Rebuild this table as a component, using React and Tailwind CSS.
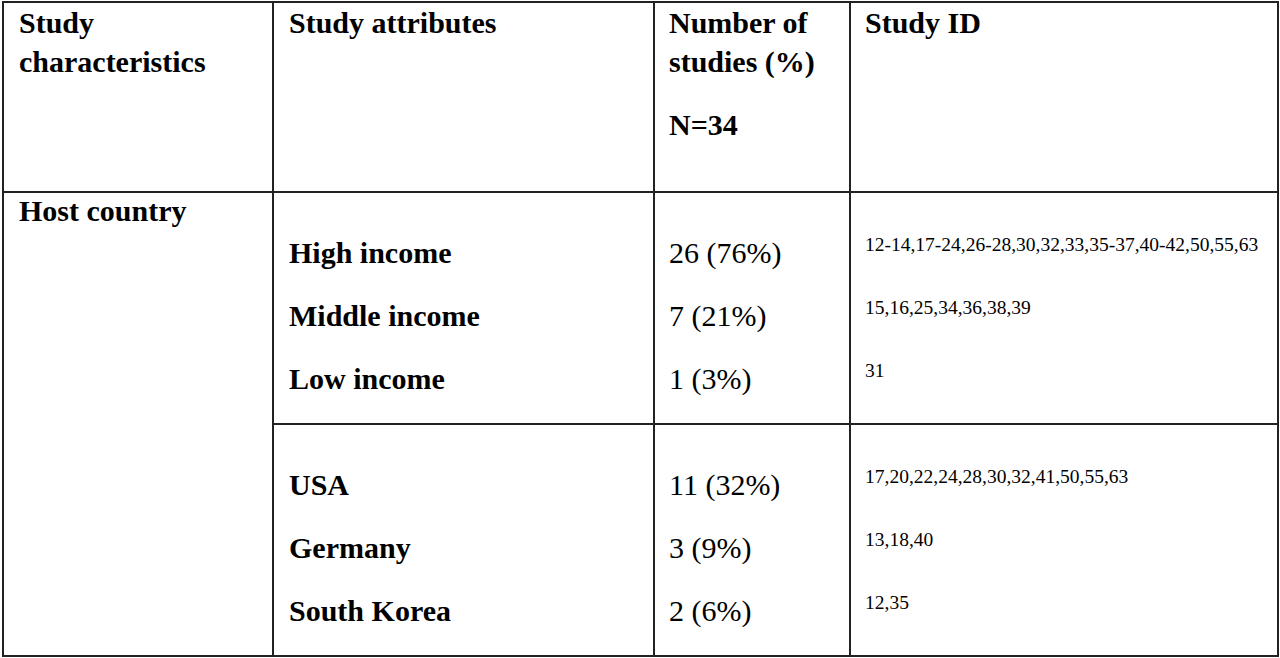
const groups = [
  [
    { label: "High income", count: "26 (76%)", ids: "12-14,17-24,26-28,30,32,33,35-37,40-42,50,55,63" },
    { label: "Middle income", count: "7 (21%)", ids: "15,16,25,34,36,38,39" },
    { label: "Low income", count: "1 (3%)", ids: "31" },
  ],
  [
    { label: "USA", count: "11 (32%)", ids: "17,20,22,24,28,30,32,41,50,55,63" },
    { label: "Germany", count: "3 (9%)", ids: "13,18,40" },
    { label: "South Korea", count: "2 (6%)", ids: "12,35" },
  ],
];

function Group({ rows }) {
  return (
    <>
      <div className="bg-white pl-[15px] pt-[28px]">
        {rows.map((r) => (
          <p key={r.label} className="font-bold leading-[63px]">{r.label}</p>
        ))}
      </div>
      <div className="bg-white pl-[14px] pt-[28px]">
        {rows.map((r) => (
          <p key={r.label} className="leading-[63px]">{r.count}</p>
        ))}
      </div>
      <div className="bg-white pl-[14px] pt-[20px] text-[19.5px]">
        {rows.map((r) => (
          <p key={r.label} className="leading-[63px]">{r.ids}</p>
        ))}
      </div>
    </>
  );
}

export default function App() {
  return (
    <div className="w-[1280px] h-[658px] bg-white overflow-hidden font-['Liberation_Serif',serif] text-black text-[30px]">
      <div className="ml-[2px] mt-[1px] w-[1277px] grid grid-cols-[268px_379px_194px_426px] grid-rows-[188px_230px_230px] gap-[2px] p-[2px] bg-[#222]">
        <div className="bg-white pl-[15px] font-bold leading-[39px]">
          <p>Study</p>
          <p>characteristics</p>
        </div>
        <div className="bg-white pl-[15px] font-bold leading-[39px]">
          <p>Study attributes</p>
        </div>
        <div className="bg-white pl-[14px] font-bold leading-[39px]">
          <p>Number of</p>
          <p>studies (%)</p>
          <p className="mt-[24px]">N=34</p>
        </div>
        <div className="bg-white pl-[14px] font-bold leading-[39px]">
          <p>Study ID</p>
        </div>

        <div className="row-span-2 bg-white pl-[15px] font-bold leading-[36px]">
          <p>Host country</p>
        </div>
        <Group rows={groups[0]} />
        <Group rows={groups[1]} />
      </div>
    </div>
  );
}
